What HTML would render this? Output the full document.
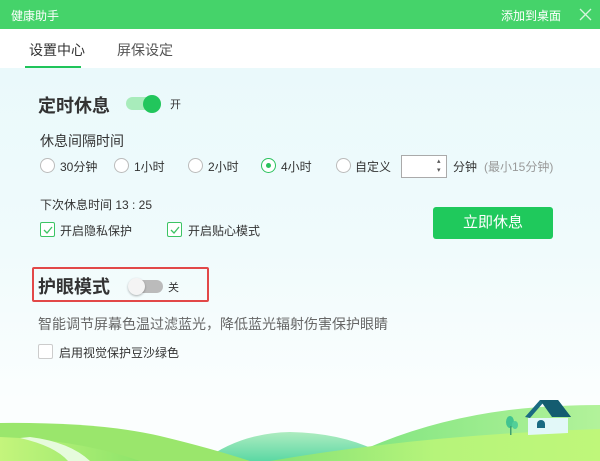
<!DOCTYPE html>
<html><head><meta charset="utf-8"><style>
*{margin:0;padding:0;box-sizing:border-box}
body{width:600px;height:461px;overflow:hidden;font-family:"Liberation Sans","Noto Sans CJK SC",sans-serif;position:relative;background:linear-gradient(#eaf9fb 68px,#f0fbfc 250px,#fbfefe 400px);color:#333}
.a{position:absolute;white-space:nowrap}
.title{left:0;top:0;width:600px;height:29px;background:#45d36a;color:#fff;font-size:12px}
.tabs{left:0;top:29px;width:600px;height:39px;background:#fff}
.radio{width:15px;height:15px;border:1px solid #bbb;border-radius:50%;background:#fff}
.cb{width:15px;height:15px;border:1px solid #3cc464;background:#fff;border-radius:2px}
</style></head><body>
<div class="a title"><span class="a" style="left:11px;top:7px">健康助手</span><span class="a" style="left:501px;top:7px">添加到桌面</span>
<svg class="a" style="left:579px;top:8px" width="13" height="13"><path d="M1 1L12 12M12 1L1 12" stroke="#d8f5df" stroke-width="1.3"/></svg></div>
<div class="a tabs"><span class="a" style="left:29px;top:11px;font-size:14px;color:#333">设置中心</span><span class="a" style="left:117px;top:11px;font-size:14px;color:#555">屏保设定</span>
<div class="a" style="left:25px;top:37px;width:56px;height:2px;background:#1fc45a"></div></div>

<span class="a" style="left:38px;top:92px;font-size:18px;font-weight:bold;color:#333">定时休息</span>
<div class="a" style="left:126px;top:97px;width:35px;height:13px;border-radius:7px;background:#a8ecbb"></div>
<div class="a" style="left:143px;top:95px;width:18px;height:18px;border-radius:50%;background:#22c65c"></div>
<span class="a" style="left:170px;top:96px;font-size:11px">开</span>

<span class="a" style="left:40px;top:131px;font-size:14px">休息间隔时间</span>
<div class="a radio" style="left:40px;top:158px"></div><span class="a" style="left:60px;top:158px;font-size:12px">30分钟</span>
<div class="a radio" style="left:114px;top:158px"></div><span class="a" style="left:134px;top:158px;font-size:12px">1小时</span>
<div class="a radio" style="left:188px;top:158px"></div><span class="a" style="left:208px;top:158px;font-size:12px">2小时</span>
<div class="a radio" style="left:261px;top:158px;border-color:#2cc25e"><div class="a" style="left:4px;top:4px;width:5px;height:5px;border-radius:50%;background:#2cc25e"></div></div><span class="a" style="left:281px;top:158px;font-size:12px">4小时</span>
<div class="a radio" style="left:336px;top:158px"></div><span class="a" style="left:355px;top:158px;font-size:12px">自定义</span>
<div class="a" style="left:401px;top:155px;width:46px;height:23px;border:1px solid #aaa;background:#fff"><span class="a" style="left:35px;top:1px;font-size:7px;line-height:9px;color:#555">▴<br>▾</span></div>
<span class="a" style="left:453px;top:158px;font-size:12px">分钟</span><span class="a" style="left:484px;top:158px;font-size:12px;color:#999">(最小15分钟)</span>

<span class="a" style="left:40px;top:196px;font-size:12px">下次休息时间 13 : 25</span>
<div class="a cb" style="left:40px;top:222px"><svg class="a" style="left:2px;top:2px" width="10" height="10"><path d="M1 5L4 8L9 2" stroke="#3cc464" fill="none" stroke-width="1.3"/></svg></div><span class="a" style="left:60px;top:222px;font-size:12px">开启隐私保护</span>
<div class="a cb" style="left:167px;top:222px"><svg class="a" style="left:2px;top:2px" width="10" height="10"><path d="M1 5L4 8L9 2" stroke="#3cc464" fill="none" stroke-width="1.3"/></svg></div><span class="a" style="left:188px;top:222px;font-size:12px">开启贴心模式</span>
<div class="a" style="left:433px;top:207px;width:120px;height:32px;background:#1fc95c;border-radius:3px;color:#fff;font-size:15px;text-align:center;line-height:32px">立即休息</div>

<div class="a" style="left:32px;top:267px;width:177px;height:35px;border:2px solid #e24848;border-radius:2px"></div>
<span class="a" style="left:38px;top:273px;font-size:18px;font-weight:bold">护眼模式</span>
<div class="a" style="left:129px;top:280px;width:34px;height:13px;border-radius:7px;background:#bbb"></div>
<div class="a" style="left:128px;top:278px;width:17px;height:17px;border-radius:50%;background:#f4f4f4;box-shadow:0 1px 2px rgba(0,0,0,.3)"></div>
<span class="a" style="left:168px;top:279px;font-size:11px">关</span>

<span class="a" style="left:38px;top:314px;font-size:14px;color:#666">智能调节屏幕色温过滤蓝光，降低蓝光辐射伤害保护眼睛</span>
<div class="a" style="left:38px;top:344px;width:15px;height:15px;border:1px solid #ccc;background:#fff;border-radius:2px"></div><span class="a" style="left:59px;top:344px;font-size:12px">启用视觉保护豆沙绿色</span>

<svg class="a" style="left:0;top:380px" width="600" height="81">
<defs>
<linearGradient id="g1" x1="0" y1="0" x2="1" y2="0"><stop offset="0" stop-color="#c4f57c"/><stop offset="1" stop-color="#8ee46a"/></linearGradient>
<linearGradient id="g2" x1="0" y1="0" x2="0" y2="1"><stop offset="0" stop-color="#aeecc0"/><stop offset="1" stop-color="#5bd8a4"/></linearGradient>
<linearGradient id="g3" x1="0" y1="0" x2="1" y2="0"><stop offset="0" stop-color="#7ee47e"/><stop offset="1" stop-color="#b2f29a"/></linearGradient>
<linearGradient id="g4" x1="0" y1="0" x2="1" y2="0"><stop offset="0" stop-color="#86e276"/><stop offset="0.5" stop-color="#b6f47a"/><stop offset="1" stop-color="#bff77a"/></linearGradient>
</defs>
<path d="M203 81 Q240 53 290 52 Q340 53 375 70 L375 81Z" fill="url(#g2)"/>
<path d="M0 43 Q100 42 160 56 Q210 68 250 81 L0 81Z" fill="#9ae66c"/>
<path d="M0 57 Q80 60 140 81 L0 81Z" fill="url(#g1)"/>
<path d="M20 58 Q55 66 68 81 L90 81 Q70 62 30 57Z" fill="#e6fbdc"/>
<path d="M340 81 Q430 35 540 27 Q575 25 600 25 L600 81Z" fill="url(#g3)"/>
<path d="M270 81 Q420 55 600 49 L600 81Z" fill="url(#g4)"/>
<path d="M528 38 L528 55 L568 53 L568 38Z" fill="#e2f8f8"/>
<path d="M525 37 L540 20 L558 20 L571 37 L566 37 L543 23 L530 38Z" fill="#1a6b82"/>
<path d="M540 20 L558 20 L571 37 L552 37Z" fill="#145c70"/>
<path d="M537 44 a4 4 0 0 1 8 0 L545 48 L537 48Z" fill="#1a6b82"/>
<ellipse cx="510" cy="42" rx="4" ry="6" fill="#42c490"/>
<ellipse cx="515" cy="45" rx="3" ry="4" fill="#52cf98"/>
<rect x="510" y="46" width="1.5" height="9" fill="#3fa070"/>
</svg>
</body></html>
